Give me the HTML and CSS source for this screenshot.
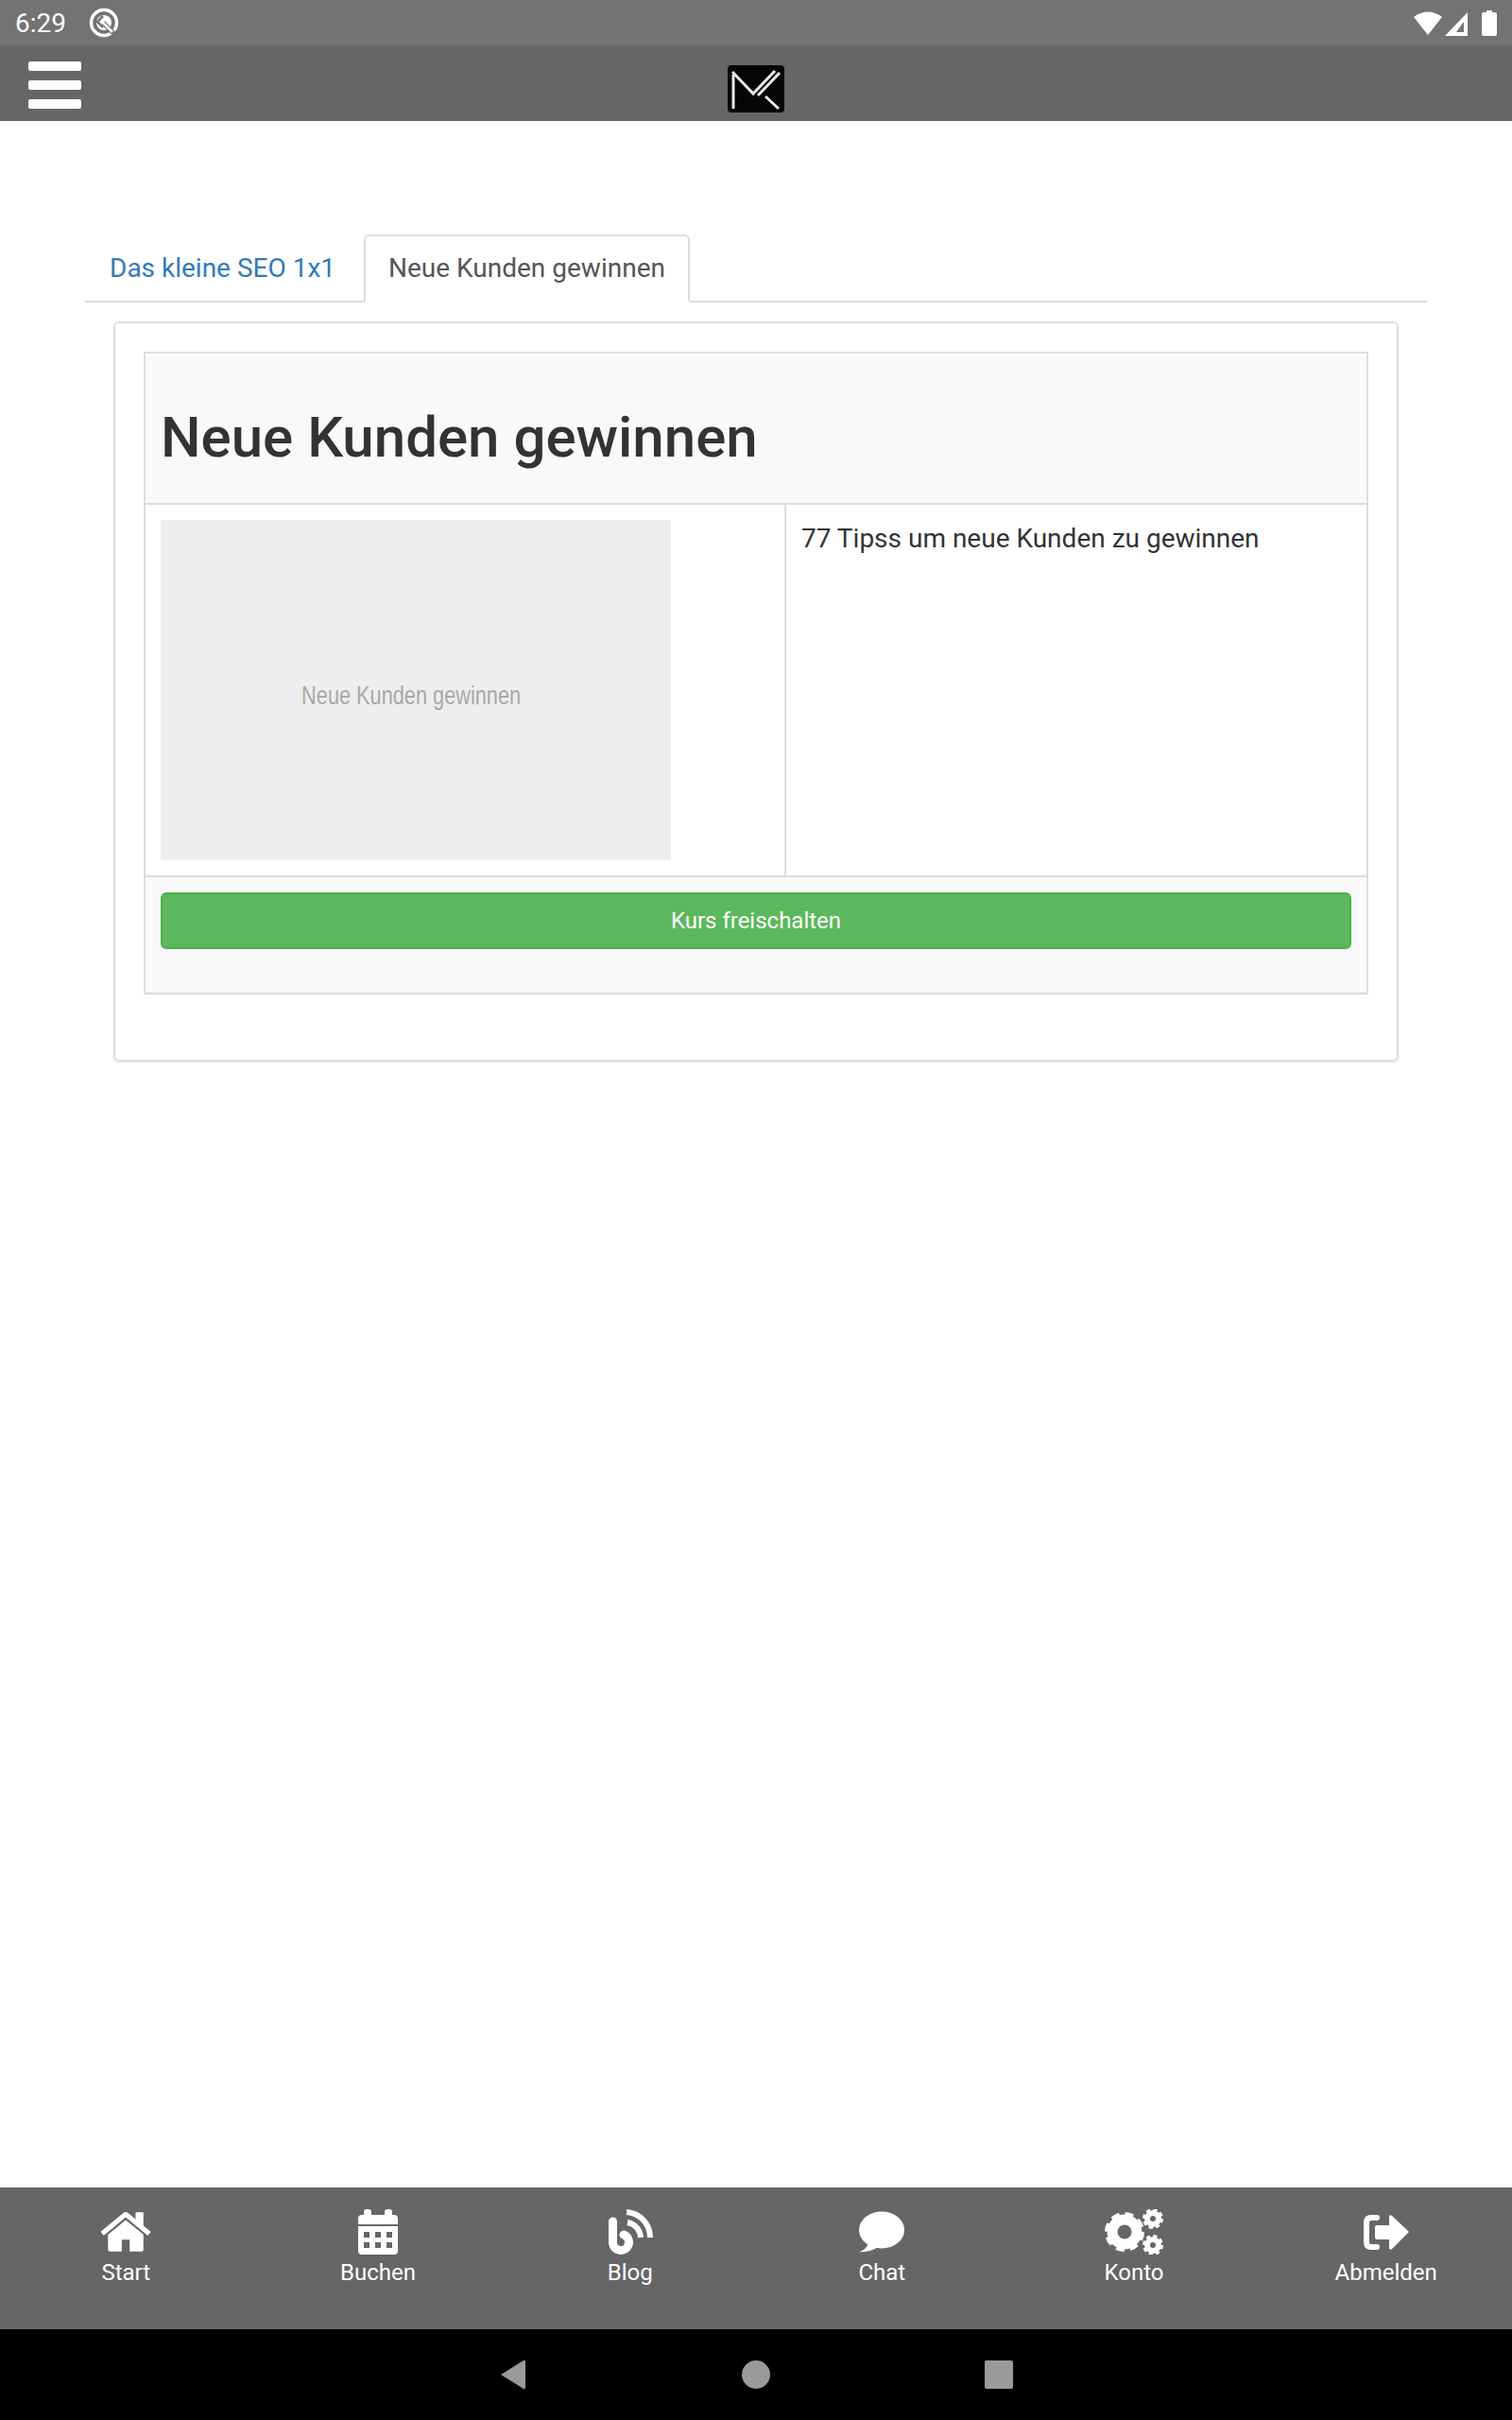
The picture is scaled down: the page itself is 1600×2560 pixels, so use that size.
FILE: index.html
```html
<!DOCTYPE html>
<html lang="de">
<head>
    <meta charset="UTF-8">
    <meta name="viewport" content="width=device-width, initial-scale=1.0">
    <title>Neue Kunden gewinnen</title>
    <link rel="stylesheet" href="styles.css">
</head>
<body>
    <div class="page">
        <div class="status-bar">
            <div class="status-left">
                <span class="clock">6:29</span>
                <svg class="status-q" viewBox="0 0 32 32">
                    <circle cx="16" cy="16" r="13.500" fill="none" stroke="#fff" stroke-width="3.500"/>
                    <circle cx="16" cy="16" r="8" fill="#fff"/>
                    <path d="M15 9 L9 15 L15 21" fill="none" stroke="#737373" stroke-width="2.500"/>
                    <path d="M15 16 L27 28" fill="none" stroke="#737373" stroke-width="5"/>
                    <path d="M14 15 L25 26" fill="none" stroke="#fff" stroke-width="2.500"/>
                </svg>
            </div>
            <div class="status-right">
                <svg class="status-wifi" viewBox="0 0 30 26"><path d="M0 7 Q15 -4 30 7 L15 26 Z" fill="#fff"/></svg>
                <svg class="status-signal" viewBox="0 0 24 25"><path d="M0 25 L24 0 V25 Z M12 21 H20 V10 Z" fill="#fff" fill-rule="evenodd"/></svg>
                <svg class="status-battery" viewBox="0 0 16 27"><path d="M5 0 H11 V2 H14 Q16 2 16 4 V25 Q16 27 14 27 H2 Q0 27 0 25 V4 Q0 2 2 2 H5 Z" fill="#fff"/></svg>
            </div>
        </div>

        <header class="app-bar">
            <div class="burger"><span></span><span></span><span></span></div>
            <svg class="logo" viewBox="0 0 60 50">
                <rect width="60" height="50" rx="4" fill="#050505"/>
                <path d="M5 7 L27 30 L50 6 M6 10 V46 M40 33 L54 46" fill="none" stroke="#e8e8e8" stroke-width="3"/>
                <path d="M32 32 L55 8" fill="none" stroke="#e8e8e8" stroke-width="3"/>
            </svg>
        </header>

        <main class="content">
            <ul class="tabs">
                <li class="tab"><a href="#">Das kleine SEO 1x1</a></li>
                <li class="tab active"><a href="#">Neue Kunden gewinnen</a></li>
            </ul>

            <div class="panel">
                <div class="course">
                    <div class="course-head">
                        <h1>Neue Kunden gewinnen</h1>
                    </div>
                    <div class="course-body">
                        <div class="course-image">
                            <div class="placeholder"><span>Neue Kunden gewinnen</span></div>
                        </div>
                        <div class="course-text">77 Tipss um neue Kunden zu gewinnen</div>
                    </div>
                    <div class="course-foot">
                        <button class="button">Kurs freischalten</button>
                    </div>
                </div>
            </div>
        </main>

        <nav class="bottom-nav">
            <a class="nav-item" href="#">
                <svg class="nav-icon" viewBox="0 0 56 48">
                    <g transform="translate(1 1) scale(0.0325)"><path d="M1408 992v480q0 26-19 45t-45 19h-384v-384h-256v384h-384q-26 0-45-19t-19-45v-480q0-1 .5-3t.5-3l575-474 575 474q1 2 1 6zm223-69l-62 74q-8 9-21 11h-3q-13 0-21-7l-692-577-692 577q-12 8-24 7-13-2-21-11l-62-74q-8-10-7-23.500t11-21.500l719-599q32-26 76-26t76 26l244 204v-195q0-14 9-23t23-9h192q14 0 23 9t9 23v408l219 182q10 8 11 21.500t-7 23.500z" fill="#fff" transform="translate(0 -190)"/></g>
                </svg>
                <span>Start</span>
            </a>
            <a class="nav-item" href="#">
                <svg class="nav-icon" viewBox="0 0 56 48">
                    <path fill="#fff" fill-rule="evenodd" d="M13 3 Q13 0 16 0 H18 Q21 0 21 3 V6 H35 V3 Q35 0 38 0 H40 Q43 0 43 3 V6 H45 Q49 6 49 10 V16 H7 V10 Q7 6 11 6 H13 Z M7 18 H49 V44 Q49 48 45 48 H11 Q7 48 7 44 Z M13 24 V30 H19 V24 Z M25 24 V30 H31 V24 Z M37 24 V30 H43 V24 Z M13 35 V41 H19 V35 Z M25 35 V41 H31 V35 Z M37 35 V41 H43 V35 Z"/>
                </svg>
                <span>Buchen</span>
            </a>
            <a class="nav-item" href="#">
                <svg class="nav-icon" viewBox="0 0 56 48">
                    <path d="M9.500 13 V35 A8.500 8.500 0 1 0 21 27" fill="none" stroke="#fff" stroke-width="9" stroke-linecap="round"/>
                    <path d="M25 14 A17 17 0 0 1 39 30" fill="none" stroke="#fff" stroke-width="6"/>
                    <path d="M24 3 A27 27 0 0 1 49 30" fill="none" stroke="#fff" stroke-width="6"/>
                </svg>
                <span>Blog</span>
            </a>
            <a class="nav-item" href="#">
                <svg class="nav-icon" viewBox="0 0 56 48">
                    <ellipse cx="28" cy="22" rx="24" ry="19.500" fill="#fff"/>
                    <path d="M14 34 Q13 43 4 45 Q16 46 24 40 Z" fill="#fff"/>
                </svg>
                <span>Chat</span>
            </a>
            <a class="nav-item" href="#">
                <svg class="nav-icon" viewBox="0 0 64 48">
                    <circle cx="22" cy="24" r="13" fill="none" stroke="#fff" stroke-width="11"/>
                    <circle cx="22" cy="24" r="18.500" fill="none" stroke="#fff" stroke-width="5" stroke-dasharray="8.600 5.930"/>
                    <circle cx="52" cy="10" r="6" fill="none" stroke="#fff" stroke-width="6"/>
                    <circle cx="52" cy="10" r="9" fill="none" stroke="#fff" stroke-width="4" stroke-dasharray="4 3.070"/>
                    <circle cx="52" cy="38" r="6" fill="none" stroke="#fff" stroke-width="6"/>
                    <circle cx="52" cy="38" r="9" fill="none" stroke="#fff" stroke-width="4" stroke-dasharray="4 3.070"/>
                </svg>
                <span>Konto</span>
            </a>
            <a class="nav-item" href="#">
                <svg class="nav-icon" viewBox="0 0 56 48">
                    <path d="M18 9 H12 Q7 9 7 14 V35 Q7 40 12 40 H18" fill="none" stroke="#fff" stroke-width="6" stroke-linecap="round"/>
                    <path d="M18 17 H31 V8 Q31 5 34 7 L52 24 L34 42 Q31 44 31 41 V32 H18 Q16 32 16 30 V19 Q16 17 18 17 Z" fill="#fff"/>
                </svg>
                <span>Abmelden</span>
            </a>
        </nav>

        <div class="system-nav">
            <svg class="sys-back" viewBox="0 0 30 32"><path d="M2 16 L26 1 Q28 0 28 3 V29 Q28 32 26 31 Z" fill="#9a9a9a"/></svg>
            <span class="sys-home"></span>
            <span class="sys-recent"></span>
        </div>
    </div>
</body>
</html>
```

FILE: styles.css
```css
body {
    margin: 0;
    font-family: Roboto, "Liberation Sans", sans-serif;
    background-color: #fff;
    color: #333;
}
.page {
    height: 2560px;
    display: flex;
    flex-direction: column;
}
.status-bar {
    height: 48px;
    background-color: #737373;
    display: flex;
    justify-content: space-between;
    align-items: center;
    padding: 0 16px;
    color: #fff;
}
.status-left {
    display: flex;
    align-items: center;
    gap: 24px;
}
.clock {
    font-size: 28px;
}
.status-q {
    width: 32px;
    height: 32px;
}
.status-right {
    display: flex;
    align-items: center;
    gap: 3px;
}
.status-wifi {
    width: 30px;
    height: 26px;
}
.status-signal {
    width: 24px;
    height: 25px;
    margin-top: 2px;
}
.status-battery {
    width: 16px;
    height: 27px;
    margin-left: 12px;
}
.app-bar {
    height: 80px;
    background-color: #666;
    display: flex;
    align-items: center;
    justify-content: center;
    position: relative;
}
.burger {
    position: absolute;
    left: 30px;
    top: 17px;
    width: 56px;
    display: flex;
    flex-direction: column;
    gap: 10px;
}
.burger span {
    display: block;
    height: 10px;
    background-color: #fff;
    border-radius: 2px;
}
.logo {
    width: 60px;
    height: 50px;
    margin-top: 12px;
}
.content {
    flex: 1;
    padding: 120px 90px 0;
}
.tabs {
    list-style: none;
    margin: 0;
    padding: 0;
    display: flex;
    height: 72px;
    border-bottom: 2px solid #ddd;
    box-sizing: border-box;
}
.tab {
    margin-right: 4px;
}
.tab a {
    display: block;
    height: 72px;
    box-sizing: border-box;
    padding: 0 24px;
    line-height: 68px;
    font-size: 28px;
    color: #337ab7;
    text-decoration: none;
    border: 2px solid transparent;
    border-radius: 6px 6px 0 0;
}
.tab.active a {
    color: #555;
    background-color: #fff;
    border-color: #ddd;
    border-bottom-color: #fff;
}
.panel {
    margin: 20px 30px 0;
    padding: 30px;
    border: 2px solid #ddd;
    border-radius: 6px;
    box-shadow: 0 1px 2px rgba(0, 0, 0, 0.1);
    height: 783px;
    box-sizing: border-box;
}
.course {
    border: 2px solid #ddd;
}
.course-head {
    height: 158px;
    background-color: #f9f9f9;
    border-bottom: 2px solid #ddd;
    padding: 0 16px;
    box-sizing: content-box;
}
.course-head h1 {
    margin: 0;
    padding-top: 56px;
    font-size: 60px;
    font-weight: 500;
    line-height: 66px;
    color: #333;
}
.course-body {
    display: grid;
    grid-template-columns: 678px 1fr;
    height: 392px;
    border-bottom: 2px solid #ddd;
}
.course-image {
    padding: 16px;
    border-right: 2px solid #ddd;
}
.placeholder {
    width: 540px;
    height: 360px;
    background-color: #eee;
    color: #a8a8a8;
    font-family: "Liberation Sans", sans-serif;
    font-size: 27px;
    white-space: nowrap;
    display: flex;
    align-items: center;
    justify-content: center;
    padding: 13px 10px 0 0;
    box-sizing: border-box;
}
.placeholder span {
    transform: scaleX(0.805);
}
.course-text {
    padding: 16px;
    font-size: 28px;
    line-height: 40px;
    color: #333;
}
.course-foot {
    height: 122px;
    background-color: #f9f9f9;
    padding: 16px 16px 0;
    box-sizing: border-box;
}
.button {
    display: block;
    width: 100%;
    height: 60px;
    background-color: #5cb85c;
    border: 2px solid #4cae4c;
    border-radius: 6px;
    color: #fff;
    font-family: inherit;
    font-size: 24px;
}
.bottom-nav {
    height: 150px;
    background-color: #666;
    display: grid;
    grid-template-columns: repeat(6, 1fr);
}
.nav-item {
    display: flex;
    flex-direction: column;
    align-items: center;
    padding-top: 23px;
    color: #fff;
    text-decoration: none;
    font-size: 24px;
}
.nav-icon {
    height: 48px;
    margin-bottom: 5px;
}
.system-nav {
    height: 96px;
    background-color: #000;
    display: grid;
    grid-template-columns: 257px 257px 257px;
    justify-content: center;
    justify-items: center;
    align-items: center;
}
.sys-back {
    width: 30px;
    height: 32px;
}
.sys-home {
    width: 30px;
    height: 30px;
    border-radius: 50%;
    background-color: #9a9a9a;
}
.sys-recent {
    width: 30px;
    height: 30px;
    border-radius: 2px;
    background-color: #9a9a9a;
}
```
